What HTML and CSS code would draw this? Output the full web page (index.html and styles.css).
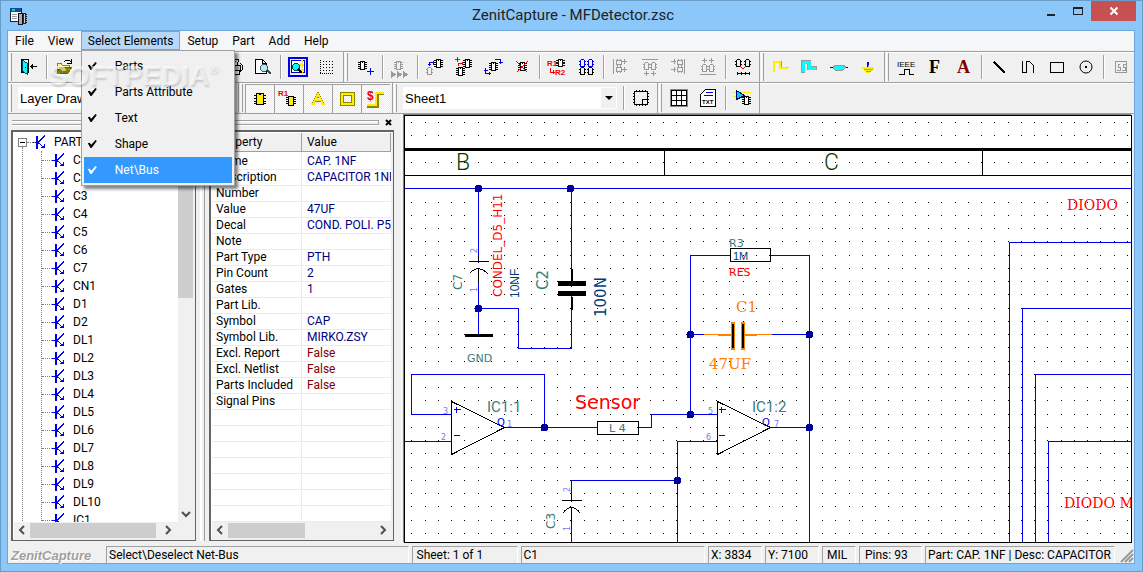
FILE: index.html
```html
<!DOCTYPE html>
<html lang="en">
<head>
<meta charset="utf-8">
<title>ZenitCapture - MFDetector.zsc</title>
<link rel="stylesheet" href="styles.css">
</head>
<body>
<svg class="defs" width="0" height="0" aria-hidden="true">
  <defs>
    <symbol id="dip" viewBox="0 0 9 11">
      <path d="M2.500 1.500h4v8h-4zM4 2.500h1" fill="var(--body,#fff)" stroke="currentColor"/>
      <path d="M0 2.500h2M0 4.500h2M0 6.500h2M0 8.500h2M7 2.500h2M7 4.500h2M7 6.500h2M7 8.500h2" stroke="currentColor"/>
    </symbol>
    <symbol id="pair" viewBox="0 0 7 9">
      <path d="M2.500 .5h2l1 1v6h-4v-6z" fill="none" stroke="currentColor"/>
      <path d="M0 2.500h1M0 5.500h1M6 2.500h1M6 5.500h1" stroke="currentColor"/>
    </symbol>
    <symbol id="node" viewBox="0 0 13 14">
      <path d="M0 7.500h4M5 7.500L12 .5M5 7.500l6 5M11.500 9v3.500H8" fill="none" stroke="#00e"/>
      <path d="M4 1v13" stroke="#00e" stroke-width="2"/>
    </symbol>
    <pattern id="dots" x="411" y="122" width="53" height="53" patternUnits="userSpaceOnUse">
      <path d="M0 .5h1M14 .5h1M27 .5h1M40 .5h1M0 13.500h1M14 13.500h1M27 13.500h1M40 13.500h1M0 27.500h1M14 27.500h1M27 27.500h1M40 27.500h1M0 40.500h1M14 40.500h1M27 40.500h1M40 40.500h1" stroke="#000"/>
    </pattern>
  </defs>
</svg>

<div class="window">
  <header class="titlebar">
    <svg class="app-icon" width="18" height="18" shape-rendering="crispEdges" aria-hidden="true">
      <path d="M1 1h11v13H1z" fill="#fff" stroke="#223"/><path d="M1 1h11v4H1z" fill="#124a9c"/><path d="M3 2h3v2H3z" fill="#2cc"/><path d="M3 7h5M3 9h5M3 11h5" stroke="#99a"/><path d="M9 6h4v11H9z" fill="#aab" stroke="#111"/><path d="M14 6h2v10h-2z" fill="#ccd" stroke="#224"/><path d="M17 7v9" stroke="#111" stroke-dasharray="1 1"/>
    </svg>
    <h1 class="title">ZenitCapture - MFDetector.zsc</h1>
    <div class="window-buttons">
      <button class="win-btn" aria-label="Minimize"><svg width="12" height="12"><path d="M2 10h8" stroke="#222" stroke-width="2"/></svg></button>
      <button class="win-btn" aria-label="Maximize"><svg width="12" height="12" shape-rendering="crispEdges"><path d="M1.500 2.500h9v7h-9z" fill="none" stroke="#222"/><path d="M1 3h10" stroke="#222" stroke-width="2"/></svg></button>
      <button class="win-btn close" aria-label="Close"><svg width="10" height="10"><path d="M1.500 1.500l7 7M8.500 1.500l-7 7" stroke="#fff" stroke-width="2"/></svg></button>
    </div>
  </header>

  <div class="client">
    <nav class="menubar">
      <button class="menu-btn">File</button>
      <button class="menu-btn">View</button>
      <div class="menu-open">
        <button class="menu-btn active" aria-expanded="true">Select Elements</button>
        <div class="dropdown">
          <label class="menu-item"><input type="checkbox" checked>Parts</label>
          <label class="menu-item"><input type="checkbox" checked>Parts Attribute</label>
          <label class="menu-item"><input type="checkbox" checked>Text</label>
          <label class="menu-item"><input type="checkbox" checked>Shape</label>
          <label class="menu-item selected"><input type="checkbox" checked>Net\Bus</label>
        </div>
      </div>
      <button class="menu-btn">Setup</button>
      <button class="menu-btn">Part</button>
      <button class="menu-btn">Add</button>
      <button class="menu-btn">Help</button>
      <div class="watermark">SOFTPEDIA<span class="reg">®</span></div>
    </nav>

    <div class="toolbar">
      <div class="group">
        <button class="tool" aria-label="Exit"><svg class="icon"><path d="M4.500 4.500h7v13h-7z" fill="#fff" stroke="#000"/><path d="M5 5l5 3v11l-5-3z" fill="#0ff" stroke="#046"/><path d="M13 11.500h7M14 10v3M15 9v5" stroke="#000"/><path d="M8 12h1" stroke="#000"/></svg></button>
        <i class="sep"></i>
        <button class="tool" aria-label="Open"><svg class="icon"><path d="M5 18V8h4l1 2h7v3" fill="#ff8" stroke="#880"/><path d="M5 18l3-6h12l-4 6z" fill="#880" stroke="#660"/><path d="M12 7q4-4 7 0M19 4v4h-4" fill="none" stroke="#000"/></svg></button>
        <i class="covered"></i>
        <button class="tool" aria-label="Print"><svg class="icon"><path d="M8 4h9l-2 6H6z" fill="#fff" stroke="#000"/><path d="M4.500 10.500h14v6h-14z" fill="#ccc" stroke="#000"/><path d="M7 15h10v4H5z" fill="#fff" stroke="#000"/><path d="M9 6h5M8 8h5M18 8l2 2v5l-2 2" fill="none" stroke="#000"/></svg></button>
        <button class="tool" aria-label="Print preview"><svg class="icon"><path d="M4.500 4.500h7l4 4v10h-11zM11.500 4.500v4h4" fill="#fff" stroke="#000"/><circle cx="13" cy="13" r="3.500" fill="#aef" stroke="#555"/><path d="M16 15l4 4" stroke="#444" stroke-width="2"/></svg></button>
        <i class="sep"></i>
        <button class="tool" aria-label="Zoom board"><svg class="icon"><path d="M3 3h18v18H3z" fill="#eee" stroke="#00e" stroke-width="2"/><path d="M5.500 5.500h13v12h-13z" fill="#fff" stroke="#00c"/><path d="M13 10h5M16 5v13M13 15h5" stroke="#fe0" stroke-width="2" stroke-dasharray="2 1"/><circle cx="10" cy="12" r="3.500" fill="#0ff" stroke="#045"/><path d="M12 14l4 4" stroke="#000" stroke-width="2"/></svg></button>
        <button class="tool" aria-label="Grid"><svg class="icon"><path d="M5.500 5v14M5 18.500h14" stroke="#000" stroke-dasharray="1 1"/><path d="M8 6.500h11M8 9.500h11M8 12.500h11M8 15.500h11" stroke="#000" stroke-dasharray="1 2"/></svg></button>
      </div>
      <div class="group">
        <button class="tool" aria-label="Add part"><svg class="icon"><use href="#dip" x="5" y="5" width="9" height="11"/><path d="M14 16.500h7M17.500 13v7" stroke="#00e"/></svg></button>
        <i class="sep"></i>
        <button class="tool" aria-label="Add parts in sequence" disabled><svg class="icon"><use href="#dip" x="6" y="5" width="9" height="11"/><path d="M3 16l5 3.500L3 23zM9 16l5 3.500L9 23zM15 16l5 3.500-5 3.500z" fill="#999"/></svg></button>
        <i class="sep"></i>
        <button class="tool" aria-label="Move part"><svg class="icon"><use class="off" href="#pair" x="3" y="12" width="7" height="9"/><use href="#dip" x="11" y="3" width="9" height="11"/><path d="M6.500 11V7.500H11M5 9.500h3M10 6v4" fill="none" stroke="#00e"/></svg></button>
        <button class="tool" aria-label="Duplicate part"><svg class="icon"><use href="#dip" x="4" y="11" width="9" height="11"/><use href="#dip" x="11" y="3" width="9" height="11"/><path d="M3 4.500h5M5.500 2v5M6.500 11V8.500H11M10 7v3" fill="none" stroke="#e00"/></svg></button>
        <button class="tool" aria-label="Rotate part"><svg class="icon"><use href="#dip" x="8" y="6" width="9" height="11"/><path d="M14 4.500h5.500V9M18 7.500h4M4.500 13v5.500H10M3 15.500h4M8 17v3" fill="none" stroke="#00e"/></svg></button>
        <button class="tool" aria-label="Delete part"><svg class="icon"><use href="#dip" x="8" y="6" width="9" height="11"/><path d="M6.500 6.500l11 11M17.500 6.500l-11 11" stroke="#e00"/></svg></button>
        <i class="sep"></i>
        <button class="tool" aria-label="Rename R1 to R2"><svg class="icon"><text class="tiny red" x="2" y="11">R1</text><text class="tiny red" x="10" y="20">R2</text><use href="#dip" x="11" y="3" width="9" height="10"/><path d="M5.500 13v4H10M8 15v4" fill="none" stroke="#e00"/></svg></button>
        <button class="tool" aria-label="Swap parts"><svg class="icon"><g class="blue"><use href="#pair" x="5" y="4" width="7" height="9"/><use href="#pair" x="13" y="4" width="7" height="9"/></g><use href="#pair" x="5" y="12" width="7" height="9"/><use href="#pair" x="13" y="12" width="7" height="9"/></svg></button>
        <i class="sep"></i>
        <button class="tool" aria-label="Align left" disabled><svg class="icon"><path d="M4.500 4v15M13 6.500h5M15 4v5M13 14.500h5M15 12v5" stroke="#999"/><path d="M7.500 5.500h5v4h-5zM7.500 12.500h5v4h-5z" fill="none" stroke="#999"/><path d="M8.500 4v1M11.500 4v1M8.500 10v2M11.500 10v2M8.500 17v1M11.500 17v1" stroke="#999"/></svg></button>
        <button class="tool" aria-label="Align top" disabled><svg class="icon"><use href="#pair" x="5" y="7" width="7" height="9"/><use href="#pair" x="12" y="7" width="7" height="9"/><path d="M4 4.500h16M8.500 16v5M6 18.500h5M15.500 16v5M13 18.500h5" stroke="#999"/></svg></button>
        <button class="tool" aria-label="Align right" disabled><svg class="icon"><path d="M17.500 4v15M4 6.500h5M7 4v5M4 14.500h5M7 12v5" stroke="#999"/><path d="M10.500 5.500h5v4h-5zM10.500 12.500h5v4h-5z" fill="none" stroke="#999"/><path d="M11.500 4v1M14.500 4v1M11.500 10v2M14.500 10v2M11.500 17v1M14.500 17v1" stroke="#999"/></svg></button>
        <button class="tool" aria-label="Align bottom" disabled><svg class="icon"><use href="#pair" x="5" y="9" width="7" height="9"/><use href="#pair" x="12" y="9" width="7" height="9"/><path d="M4 19.500h16M8.500 3v5M6 5.500h5M15.500 3v5M13 5.500h5" stroke="#999"/></svg></button>
        <i class="sep"></i>
        <button class="tool" aria-label="Spacing"><svg class="icon"><use href="#pair" x="4" y="4" width="7" height="9"/><use href="#pair" x="13" y="4" width="7" height="9"/><path d="M9 11l3 3 3-3" fill="none" stroke="#e00"/><path d="M6 18.500h13M6.500 17v3M10.500 17v3M14.500 17v3M18.500 17v3" stroke="#000"/></svg></button>
      </div>
      <div class="group">
        <button class="tool" aria-label="Net"><svg class="icon"><path d="M4 17V6h8v6h7" fill="none" stroke="#999"/><path d="M5 17V7h6v6h7" fill="none" stroke="#fe0" stroke-width="2"/></svg></button>
        <button class="tool" aria-label="Bus"><svg class="icon"><path d="M5 18V7h6v6h8" fill="none" stroke="#999" stroke-width="4"/><path d="M5 17V7h6v6h7" fill="none" stroke="#0ff" stroke-width="3"/></svg></button>
        <button class="tool" aria-label="Connector"><svg class="icon"><path d="M3 12h18" stroke="#00a"/><path d="M8 10h8l3 2-3 3H8l-2-2z" fill="#0ff" stroke="#999"/></svg></button>
        <button class="tool" aria-label="Ground"><svg class="icon"><path d="M12 7v6" stroke="#00e" stroke-width="2"/><path d="M6 12.500h12M12 10v7" stroke="#999"/><path d="M6 13h12M8 15h8M10 17h4" stroke="#fe0" stroke-width="2"/><path d="M8 14.500h9M10 16.500h5" stroke="#999"/></svg></button>
      </div>
      <div class="group last">
        <button class="tool" aria-label="IEEE symbol"><svg class="icon"><text class="ieee" x="3" y="12">IEEE</text><path d="M5 19.500h5v-5h5v5h5" fill="none" stroke="#000"/></svg></button>
        <button class="tool" aria-label="Field"><svg class="icon"><text class="serif-glyph" x="6" y="18">F</text></svg></button>
        <button class="tool" aria-label="Text"><svg class="icon"><text class="serif-glyph maroon" x="5" y="18">A</text></svg></button>
        <i class="sep"></i>
        <button class="tool" aria-label="Line"><svg class="icon"><path d="M7 7l11 11" stroke="#000" stroke-width="1.500"/></svg></button>
        <button class="tool" aria-label="Polyline"><svg class="icon"><path d="M6.500 6v11.500h4V6.500h3l4 4V18" fill="none" stroke="#000"/></svg></button>
        <button class="tool" aria-label="Rectangle"><svg class="icon"><path d="M5.500 7.500h13v10h-13z" fill="none" stroke="#000"/></svg></button>
        <button class="tool" aria-label="Circle"><svg class="icon round"><circle cx="12" cy="12" r="6" fill="none" stroke="#000"/><path d="M11 12h2" stroke="#000" stroke-width="2"/></svg></button>
        <i class="sep"></i>
        <button class="tool" aria-label="Symbol" disabled><svg class="icon"><path d="M6.500 6.500h11v11h-11z" fill="none" stroke="#999"/><path d="M11 9H9v3h2v3H8M13 15h3v-3h-2V9h3" fill="none" stroke="#999"/></svg></button>
      </div>
    </div>

    <div class="toolbar">
      <div class="group">
        <select class="combo layer" aria-label="Layer"><option>Layer Drawing</option></select>
      </div>
      <div class="group">
        <button class="tool pressed" aria-label="Select parts"><svg class="icon"><path d="M8.500 6.500h3v1h1v-1h3v11h-7z" fill="#fe0" stroke="#000"/><path d="M6 8.500h2M6 11.500h2M6 14.500h2M6 16.500h2M16 8.500h2M16 11.500h2M16 14.500h2M16 16.500h2" stroke="#000"/></svg></button>
        <button class="tool pressed" aria-label="Select attributes"><svg class="icon"><text class="tiny red" x="1" y="9">R1</text><path d="M11.500 9.500h5v9h-5z" fill="#fe0" stroke="#000"/><path d="M9 10.500h2M9 12.500h2M9 14.500h2M9 16.500h2M17 10.500h2M17 12.500h2M17 14.500h2M17 16.500h2" stroke="#000"/></svg></button>
        <button class="tool pressed" aria-label="Select text"><svg class="icon"><path d="M7 17l5-10 5 10M9 13h6" fill="none" stroke="#880" stroke-width="3"/><path d="M7 17l5-10 5 10M9 13h6M5 17h4M15 17h4" fill="none" stroke="#fe0" stroke-width="2"/></svg></button>
        <button class="tool pressed" aria-label="Select shapes"><svg class="icon"><path d="M7 7h11v10H7z" fill="none" stroke="#880" stroke-width="4"/><path d="M7 7h11v10H7z" fill="none" stroke="#fe0" stroke-width="2"/></svg></button>
        <button class="tool pressed" aria-label="Select nets"><svg class="icon"><text class="dollar" x="3" y="13">$</text><path d="M3 19h10V6h7" fill="none" stroke="#880" stroke-width="3"/><path d="M3 18h9V6h8" fill="none" stroke="#fe0" stroke-width="2"/></svg></button>
      </div>
      <div class="group">
        <select class="combo sheet" aria-label="Sheet"><option>Sheet1</option></select>
        <i class="sep"></i>
        <button class="tool" aria-label="Sheet frame"><svg class="icon"><path d="M5.500 5.500h13v13h-13zM13 18v-4.500h6" fill="none" stroke="#000"/><path d="M7 4.500h12M7 19.500h12M4.500 7v12M19.500 7v12" stroke="#000" stroke-dasharray="1 2"/></svg></button>
      </div>
      <div class="group">
        <button class="tool" aria-label="Table"><svg class="icon"><path d="M3.500 3.500h17v17h-17z" fill="#fff" stroke="#888"/><path d="M4.500 4.500h15v15h-15zM4 9.500h16M4 14.500h16M9.500 4v16M14.500 4v16" fill="none" stroke="#000"/></svg></button>
        <button class="tool" aria-label="Text report"><svg class="icon"><path d="M4.500 20.500v-12l5-5h10v17z" fill="#fff" stroke="#000"/><path d="M10 6.500h7M8 9.500h9" stroke="#00e"/><text class="txt" x="6" y="18">TXT</text></svg></button>
        <i class="sep"></i>
        <button class="tool" aria-label="Part gates"><svg class="icon"><path d="M2 6.500h18M2 10.500h8" stroke="#fe0"/><path d="M5.500 4.500v9l8-4z" fill="#0cf" stroke="#006"/><use href="#dip" x="10" y="9" width="10" height="11"/></svg></button>
      </div>
    </div>

    <div class="work">
      <aside class="dock">
        <div class="gripper"><i class="grip-lines"></i><button class="dock-close" aria-label="Close panel"><svg width="7" height="7"><path d="M1 1l5 5M6 1L1 6" stroke="#000" stroke-width="2"/></svg></button></div>
        <div class="panels">
          <section class="panel">
            <div class="scroll-row">
              <ul class="tree">
                <li class="root"><i class="expander"></i><svg class="node"><use href="#node"/></svg>PARTS
                  <ul class="branch">
                    <li><svg class="node"><use href="#node"/></svg>C1</li>
                    <li><svg class="node"><use href="#node"/></svg>C2</li>
                    <li><svg class="node"><use href="#node"/></svg>C3</li>
                    <li><svg class="node"><use href="#node"/></svg>C4</li>
                    <li><svg class="node"><use href="#node"/></svg>C5</li>
                    <li><svg class="node"><use href="#node"/></svg>C6</li>
                    <li><svg class="node"><use href="#node"/></svg>C7</li>
                    <li><svg class="node"><use href="#node"/></svg>CN1</li>
                    <li><svg class="node"><use href="#node"/></svg>D1</li>
                    <li><svg class="node"><use href="#node"/></svg>D2</li>
                    <li><svg class="node"><use href="#node"/></svg>DL1</li>
                    <li><svg class="node"><use href="#node"/></svg>DL2</li>
                    <li><svg class="node"><use href="#node"/></svg>DL3</li>
                    <li><svg class="node"><use href="#node"/></svg>DL4</li>
                    <li><svg class="node"><use href="#node"/></svg>DL5</li>
                    <li><svg class="node"><use href="#node"/></svg>DL6</li>
                    <li><svg class="node"><use href="#node"/></svg>DL7</li>
                    <li><svg class="node"><use href="#node"/></svg>DL8</li>
                    <li><svg class="node"><use href="#node"/></svg>DL9</li>
                    <li><svg class="node"><use href="#node"/></svg>DL10</li>
                    <li><svg class="node"><use href="#node"/></svg>IC1</li>
                  </ul>
                </li>
              </ul>
              <div class="vscroll"><svg class="arrow"><path d="M4 10l4-4 4 4"/></svg><i class="thumb"></i><svg class="arrow bottom"><path d="M4 6l4 4 4-4"/></svg></div>
            </div>
            <div class="hscroll corner"><svg class="arrow"><path d="M10 4L6 8l4 4"/></svg><i class="thumb wide"></i><svg class="arrow end"><path d="M6 4l4 4-4 4"/></svg></div>
          </section>
          <i class="splitter"></i>
          <section class="panel">
            <div class="scroll-row">
              <table class="props">
                <thead><tr><th>Property</th><th>Value</th></tr></thead>
                <tbody>
                  <tr><td>Name</td><td>CAP. 1NF</td></tr>
                  <tr><td>Description</td><td>CAPACITOR 1NF</td></tr>
                  <tr><td>Number</td><td></td></tr>
                  <tr><td>Value</td><td>47UF</td></tr>
                  <tr><td>Decal</td><td>COND. POLI. P5</td></tr>
                  <tr><td>Note</td><td></td></tr>
                  <tr><td>Part Type</td><td>PTH</td></tr>
                  <tr><td>Pin Count</td><td>2</td></tr>
                  <tr><td>Gates</td><td>1</td></tr>
                  <tr><td>Part Lib.</td><td></td></tr>
                  <tr><td>Symbol</td><td>CAP</td></tr>
                  <tr><td>Symbol Lib.</td><td>MIRKO.ZSY</td></tr>
                  <tr><td>Excl. Report</td><td class="flag">False</td></tr>
                  <tr><td>Excl. Netlist</td><td class="flag">False</td></tr>
                  <tr><td>Parts Included</td><td class="flag">False</td></tr>
                  <tr><td>Signal Pins</td><td></td></tr>
                  <tr><td></td><td></td></tr><tr><td></td><td></td></tr><tr><td></td><td></td></tr><tr><td></td><td></td></tr><tr><td></td><td></td></tr><tr><td></td><td></td></tr><tr><td></td><td></td></tr>
                </tbody>
              </table>
            </div>
            <div class="hscroll"><svg class="arrow"><path d="M10 4L6 8l4 4"/></svg><i class="thumb short"></i><svg class="arrow end"><path d="M6 4l4 4-4 4"/></svg></div>
          </section>
        </div>
      </aside>

      <main class="canvas">
        <svg class="sheet-view" role="img" aria-label="Schematic sheet">
          <g transform="translate(-405 -116)"><rect x="405" y="116" width="2000" height="2000" fill="url(#dots)"/></g>
          <g transform="translate(-404.500 -115.500)">
            <g class="ink"><path d="M404 149h2000" stroke-width="3"/><path d="M404 175h2000M664 149v26M982 149v26"/></g>
            <path class="wire" d="M404 188h2000M478 188v147M478 308h40v40h53V188M411 414V374h133v53M411 414h40M404 441h47M504 427h93M638 427h13v-13h66M690 414V255h40M770 255h39v1500M690 334h119M770 427h39M717 441h-40v1500M677 480H571v1500M2000 242H1009v1500M2000 308H1022v1500M2000 374H1035v1500M2000 441H1048v1500"/>
            <g class="ink">
              <path d="M478 255v6M468 261h20M469 273q9-10 19 1M478 268v14"/>
              <path d="M571 493v7M561 500h20M562 513q9-12 18 0M571 507v14"/>
              <path d="M464 335h28" stroke-width="3"/>
              <path d="M571 268v14M571 296v13" stroke-width="2"/>
              <path d="M557 283h28M557 293h28" stroke-width="5"/>
              <path class="filled" d="M451 401v53l53-27zM717 401v53l53-27z"/>
              <path class="filled" d="M730 248h40v13h-40zM597 421h41v13h-41z"/>
            </g>
            <path d="M478 262v5M571 501v5M571 286v4" stroke="#fff" stroke-width="2"/>
            <path d="M733 334h8" stroke="#fff"/>
            <path class="amber" d="M703 334h27M744 334h27"/><path class="amber" d="M717 335h13M744 335h12"/>
            <path class="amber" d="M732 321v28M742 321v28" stroke-width="4"/>
            <path class="ink" d="M732 323v24M742 323v24" stroke-width="2"/>
            <path class="pin" d="M453 409h7M456 406v6M453 435h6M718 409h7M721 406v6M718 435h6"/>
            <g class="joint"><circle cx="478" cy="188" r="4"/><circle cx="570" cy="188" r="4"/><circle cx="478" cy="308" r="4"/><circle cx="690" cy="334" r="4"/><circle cx="809" cy="334" r="4"/><circle cx="690" cy="414" r="4"/><circle cx="809" cy="427" r="4"/><circle cx="544" cy="427" r="4"/><circle cx="677" cy="480" r="4"/></g>
          </g>
          <g class="labels" transform="translate(-405 -116)">
            <text class="zone" x="456" y="170">B</text><text class="zone" x="824" y="170">C</text>
            <text class="ref s12" transform="translate(462 290) rotate(-90)">C7</text>
            <text class="val s12 red" transform="translate(502 297) rotate(-90)">CONDEL_D5_H11</text>
            <text class="val s12 narrow" transform="translate(519 298) rotate(-90)">10NF</text>
            <text class="ref s15" transform="translate(548 290) rotate(-90)">C2</text>
            <text class="val s15" transform="translate(606 317) rotate(-90)">100N</text>
            <text class="ref s11" x="467" y="362">GND</text>
            <text class="num" transform="translate(477 253) rotate(-90)">2</text><text class="num" transform="translate(477 292) rotate(-90)">1</text>
            <text class="num" transform="translate(570 492) rotate(-90)">2</text><text class="num" transform="translate(570 531) rotate(-90)">1</text>
            <text class="ref s12" transform="translate(555 529) rotate(-90)">C3</text>
            <text class="ref s11" x="729" y="247">R3</text><text class="val s11 narrow" x="733" y="260">1M</text><text class="val s11 red" x="729" y="276">RES</text>
            <text class="serif amber-text" x="736" y="312">C1</text><text class="serif amber-text" x="709" y="369">47UF</text>
            <text class="ref s15 thin" x="487" y="412">IC1:1</text><text class="ref s15 thin" x="752" y="412">IC1:2</text>
            <text class="q" x="497" y="426">Q</text><text class="q" x="762" y="426">Q</text>
            <text class="num" x="443" y="414">3</text><text class="num" x="441" y="440">2</text><text class="num" x="507" y="427">1</text>
            <text class="num" x="708" y="414">5</text><text class="num" x="706" y="440">6</text><text class="num" x="774" y="427">7</text>
            <text class="ref s11" x="609" y="432">L 4</text>
            <text class="sensor" x="575" y="409">Sensor</text>
            <text class="serif red" x="1067" y="210">DIODO</text><text class="serif red" x="1064" y="508">DIODO M</text>
          </g>
        </svg>
      </main>
    </div>

    <footer class="status">
      <span class="brand">ZenitCapture</span>
      <span class="cell c-hint">Select\Deselect Net-Bus</span>
      <span class="cell c-sheet">Sheet: 1 of 1</span>
      <span class="cell c-item">C1</span>
      <span class="cell c-pos">X: 3834</span>
      <span class="cell c-pos">Y: 7100</span>
      <span class="cell c-unit">MIL</span>
      <span class="cell c-pins">Pins: 93</span>
      <span class="cell c-part">Part: CAP. 1NF | Desc: CAPACITOR 1NF</span>
      <svg class="resize" width="16" height="16"><path d="M3 15L15 3M7 15l8-8M11 15l4-4" stroke="#999" stroke-width="2"/></svg>
    </footer>
  </div>
</div>
</body>
</html>
```

FILE: styles.css
```css
*, *::before, *::after { box-sizing: border-box; }
body { margin: 0; font: 12px/16px Roboto, "Open Sans", sans-serif; color: #000; }
button, select, input { font: inherit; color: inherit; margin: 0; padding: 0; border: 0; background: none; border-radius: 0; }
ul { list-style: none; margin: 0; padding: 0; }
svg { display: block; flex: none; }
.defs { position: absolute; }

.window { display: flex; flex-direction: column; height: 100vh; padding: 0 7px 7px 6px; background: #8cc7fa; border: 1px solid #6a9cc8; overflow: hidden; }
.titlebar { display: flex; align-items: center; height: 29px; flex: none; }
.app-icon { margin-left: 2px; }
.title { flex: 1; margin: 0; padding-left: 82px; text-align: center; font-weight: 400; font-size: 15px; line-height: 29px; color: #222; }
.window-buttons { display: flex; align-self: flex-start; height: 20px; margin-right: -1px; }
.win-btn { width: 27px; height: 20px; display: flex; align-items: center; justify-content: center; }
.win-btn.close { width: 45px; background: #c75050; }

.client { flex: 1; min-height: 0; display: flex; flex-direction: column; background: #f0f0f0; border: 1px solid #6fa6d8; }
.menubar { display: flex; height: 20px; flex: none; background: #f5f6f7; position: relative; z-index: 5; border-bottom: 1px solid #f0f0f0; }
.menu-btn { height: 19px; padding: 0 7px; line-height: 18px; white-space: nowrap; }
.menu-open { position: relative; }
.menu-btn.active { background: #b8d8f9; box-shadow: inset 0 0 0 1px #6fa8dc; }
.dropdown { position: absolute; top: 19px; left: 0; width: 154px; padding: 2px; background: #f0f0f0; border: 1px solid #a0a0a0; box-shadow: 3px 3px 3px rgba(0,0,0,.5); }
.menu-item { display: flex; align-items: center; height: 26px; padding-left: 4px; gap: 18px; }
.menu-item.selected { background: #3399ff; color: #fff; }
.menu-item input { appearance: none; width: 9px; height: 8px; background: currentColor; clip-path: polygon(0 40%, 20% 35%, 38% 60%, 85% 0, 100% 12%, 42% 100%, 30% 100%); }
.watermark { position: absolute; left: 41px; top: 22px; font: 700 28px/32px "Liberation Sans", sans-serif; color: rgba(255,255,255,.6); text-shadow: 1px 2px 2px rgba(0,0,0,.16); pointer-events: none; }
.reg { font-size: 12px; vertical-align: 12px; }

.toolbar { display: flex; flex: none; height: 31px; border-top: 1px solid #a0a0a0; box-shadow: inset 0 1px #fff; overflow: hidden; }
.group { display: flex; flex: none; align-items: center; padding-right: 2px; border-right: 1px solid #a0a0a0; }
.group::before { content: ""; width: 3px; height: 28px; margin: 0 2px 0 1px; border-left: 1px solid #fff; border-right: 1px solid #a0a0a0; }
.group.last { border-right: 0; }
.tool { width: 29px; height: 29px; flex: none; display: flex; align-items: center; justify-content: center; color: #000; }
.tool:disabled { color: #999; --body: #f0f0f0; }
.pressed { border-left: 1px solid #a0a0a0; border-top: 1px solid #a0a0a0; background: repeating-conic-gradient(#fff 0 25%, #ececec 0 50%) 0 0 / 2px 2px; }
.icon { width: 24px; height: 24px; shape-rendering: crispEdges; }
.icon.round { shape-rendering: auto; }
.sep { width: 6px; height: 24px; flex: none; background: linear-gradient(90deg, transparent 3px, #a0a0a0 3px 4px, #fff 4px 5px, transparent 5px); }
.covered { width: 141px; }
.off { color: #999; }
.blue { color: #00e; }
.red { fill: #e00; }
.tiny { font: 700 8px "Liberation Sans", sans-serif; }
.ieee { font: 8px "Liberation Sans", sans-serif; }
.txt { font: 700 6px "Liberation Sans", sans-serif; }
.dollar { font: 700 12px "Liberation Sans", sans-serif; fill: #e00; }
.serif-glyph { font: 700 18px "Liberation Serif", serif; }
.maroon { fill: #800000; }
.combo { appearance: none; height: 22px; font: 13px "Liberation Sans", sans-serif; padding-left: 2px; background-color: #fff; }
.layer { width: 215px; margin: 0 3px 0 4px; }
.sheet { width: 214px; margin: 0 3px 0 4px; background-image: url("data:image/svg+xml,%3Csvg xmlns='http://www.w3.org/2000/svg' width='15' height='20'%3E%3Cpath d='M0 0h15v20H0z' fill='%23f0f0f0'/%3E%3Cpath d='M4 8h8l-4 4z'/%3E%3C/svg%3E"); background-repeat: no-repeat; background-position: right 1px center; }

.work { flex: 1; min-height: 0; display: flex; border-top: 1px solid #a0a0a0; }
.dock { width: 394px; flex: none; display: flex; flex-direction: column; padding: 0 7px 4px 3px; border-right: 1px solid #fff; }
.gripper { display: flex; align-items: center; height: 16px; gap: 4px; }
.grip-lines { flex: 1; height: 5px; margin-left: 1px; border: 1px solid #a0a0a0; border-width: 1px 1px 1px 0; background: linear-gradient(#fff 1px, #f0f0f0 1px); box-shadow: 0 1px #fff; }
.dock-close { width: 11px; display: flex; justify-content: center; }
.panels { flex: 1; min-height: 0; display: flex; }
.panel { flex: 1; min-width: 0; display: flex; flex-direction: column; background: #fff; border: 1px solid #646464; border-width: 2px 1px 1px 2px; padding: 1px 2px 2px 1px; box-shadow: inset -2px -2px #f0f0f0; }
.splitter { width: 13px; flex: none; background: linear-gradient(90deg, transparent 4px, #fff 4px 6px, transparent 6px 8px, #a0a0a0 8px 9px, transparent 9px); }
.scroll-row { flex: 1; min-height: 0; display: flex; overflow: hidden; }
.tree { flex: 1; overflow: hidden; line-height: 18px; }
.root { padding-left: 40px; position: relative; white-space: nowrap; }
.root > .node { position: absolute; left: 19px; top: 2px; }
.root::before { content: ""; position: absolute; left: 8px; top: 14px; bottom: 0; border-left: 1px dotted #808080; }
.root::after { content: ""; position: absolute; left: 13px; top: 9px; width: 8px; border-top: 1px dotted #808080; }
.expander { position: absolute; left: 4px; top: 5px; width: 9px; height: 9px; border: 1px solid #808080; background: linear-gradient(#000, #000) center / 5px 1px no-repeat #fff; }
.branch { margin-left: -13px; border-left: 1px dotted #808080; }
.branch li { display: flex; align-items: center; height: 18px; }
.branch li::before { content: ""; width: 10px; border-top: 1px dotted #808080; }
.branch .node { margin-right: 8px; }
.node { width: 13px; height: 14px; shape-rendering: crispEdges; }
.vscroll { width: 15px; flex: none; background: #f0f0f0; display: flex; flex-direction: column; }
.vscroll .thumb { height: 149px; background: #cdcdcd; }
.hscroll { display: flex; align-items: center; height: 16px; flex: none; background: #f0f0f0; }
.arrow { width: 16px; height: 16px; fill: none; stroke: #505050; stroke-width: 2; }
.arrow.bottom { margin-top: auto; }
.arrow.end { margin-left: auto; }
.corner { padding-right: 17px; }
.hscroll .thumb { height: 15px; background: #cdcdcd; }
.hscroll .wide { width: 126px; }
.hscroll .short { width: 77px; }
.props { width: 100%; table-layout: fixed; border-collapse: separate; border-spacing: 0; height: max-content; }
.props th { height: 19px; padding: 0 0 0 5px; text-align: left; font-weight: 400; background: #f0f0f0; border-right: 1px solid #a0a0a0; border-bottom: 1px solid #a0a0a0; overflow: hidden; }
.props th:first-child { width: 90px; }
.props td { height: 16px; line-height: 15px; padding: 0 0 0 4px; border-right: 1px solid #ebebeb; border-bottom: 1px solid #ebebeb; overflow: hidden; white-space: nowrap; }
.props tbody tr:first-child td { height: 18px; padding-top: 2px; }
.props td + td { color: #000080; padding-left: 5px; border-right: 0; }
.props td.flag { color: #800000; }

.canvas { flex: 1; min-width: 0; background: #fff; border: 1px solid #000; box-shadow: -1px -1px #808080; margin: 1px 2px 2px 2px; overflow: hidden; }
.sheet-view { width: 100%; height: 100%; shape-rendering: crispEdges; }
.ink { stroke: #000; fill: none; }
.filled { fill: none; }
.wire { stroke: #00e; fill: none; }
.pin { stroke: #00e; }
.amber { stroke: #ff8000; fill: none; }
.joint { fill: #0000a0; }
.labels { font-family: "DejaVu Sans", sans-serif; }
.ref { fill: #3c7c7c; }
.val { fill: #003c7c; }
.val.red { fill: #f00; }
.s11 { font-size: 11px; }
.s12 { font-size: 12px; }
.s15 { font-size: 15px; }
.thin { font-family: Roboto, sans-serif; }
.narrow { font-family: "Liberation Sans", sans-serif; }
.num { font-size: 8px; fill: #7878f8; }
.q { font: 10px "DejaVu Sans", sans-serif; fill: #00e; }
.zone { font: 300 23px Roboto, sans-serif; fill: #003c00; }
.serif { font: 14px "DejaVu Serif", serif; }
.serif.red, .sensor { fill: #f00; }
.amber-text { font-size: 15px; fill: #ff8000; }
.sensor { font: 19px "DejaVu Sans", sans-serif; }

.status { display: flex; flex: none; height: 18px; gap: 3px; padding-top: 1px; }
.brand { width: 95px; padding-left: 3px; font: italic 700 13px/20px "Liberation Sans", sans-serif; color: #a0a0a0; text-shadow: 1px 1px #fff; }
.cell { padding-left: 2px; line-height: 16px; border: 1px solid #a0a0a0; border-right-color: #fff; border-bottom: 0; white-space: nowrap; overflow: hidden; }
.c-hint { flex: 306 1 0; }
.c-sheet { width: 106px; padding-left: 4px; }
.c-item { flex: 185 1 0; }
.c-pos { width: 54px; }
.c-unit { width: 34px; padding-left: 4px; }
.c-pins { width: 63px; padding-left: 5px; }
.c-part { width: 190px; }
.resize { align-self: flex-end; }
```
